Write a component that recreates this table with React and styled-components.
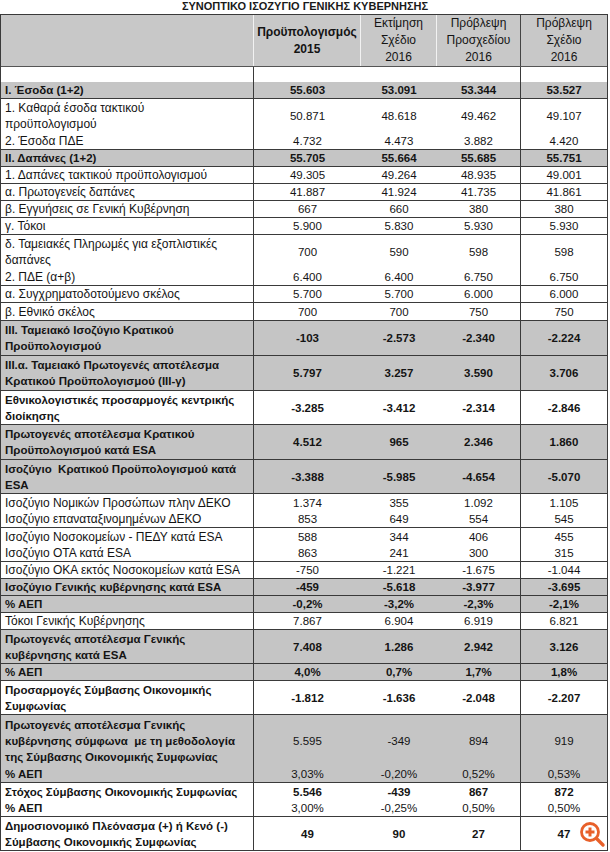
import React from 'react';
import styled, { createGlobalStyle } from 'styled-components';

const Global = createGlobalStyle`
  html, body { margin: 0; padding: 0; background: #fff; }
  body { font-family: "Liberation Sans", Arial, sans-serif; color: #141414; }
`;

const COLS = '253px 107px 76px 84px 86px';
const LINE = 17;

const Page = styled.div`
  position: relative;
  width: 610px;
  height: 852px;
  overflow: hidden;
  background: #fff;
`;

const Title = styled.div`
  height: 14px;
  line-height: 13px;
  text-align: center;
  font-size: 11px;
  font-weight: 700;
  color: #1a1a1a;
`;

const Table = styled.div`
  width: 608px;
  box-sizing: border-box;
  border-left: 1px solid #3a3a3a;
  border-right: 1px solid #3a3a3a;
  border-top: 1px solid #3a3a3a;
  font-size: 11.5px;
`;

const HeadRow = styled.div`
  display: grid;
  grid-template-columns: ${COLS};
  height: 51px;
  background: #c8c8c8;
  border-bottom: 1px solid #555;
`;

const HeadCell = styled.div`
  display: flex;
  flex-direction: column;
  align-items: center;
  justify-content: center;
  line-height: 17px;
  text-align: center;
  font-size: 12px;
  font-weight: ${p => (p.$bold ? 700 : 400)};
  border-right: 1px solid ${p => (p.$dark ? '#444' : '#f2f2f2')};
  &:last-child { border-right: none; }
`;

const Row = styled.div`
  display: grid;
  grid-template-columns: ${COLS};
  box-sizing: border-box;
  height: ${p => p.$h}px;
  background: ${p => (p.$gray ? '#c5c5c5' : '#fff')};
  border-bottom: ${p => (p.$border ? '1px solid #3a3a3a' : 'none')};
`;

const Label = styled.div`
  box-sizing: border-box;
  padding-left: 4px;
  display: flex;
  flex-direction: column;
  justify-content: center;
  line-height: 16px;
  white-space: pre;
  font-size: ${p => (p.$bold ? '11.5px' : '12px')};
  font-weight: ${p => (p.$bold ? 700 : 400)};
  border-right: 1px solid #3a3a3a;
`;

const Val = styled.div`
  display: flex;
  align-items: center;
  justify-content: center;
  font-weight: ${p => (p.$bold ? 700 : 400)};
  border-right: ${p => (p.$dark ? '1px solid #3a3a3a' : 'none')};
`;

const Zoom = styled.div`
  position: absolute;
  left: 578px;
  top: 820px;
  width: 28px;
  height: 28px;
`;

const rows = [
  { l: ['Ι. Έσοδα (1+2)'], v: ['55.603', '53.091', '53.344', '53.527'], g: 1, b: 1 },
  { l: ['1. Καθαρά έσοδα τακτικού', 'προϋπολογισμού'], v: ['50.871', '48.618', '49.462', '49.107'], nb: 1 },
  { l: ['2. Έσοδα ΠΔΕ'], v: ['4.732', '4.473', '3.882', '4.420'] },
  { l: ['ΙΙ. Δαπάνες (1+2)'], v: ['55.705', '55.664', '55.685', '55.751'], g: 1, b: 1 },
  { l: ['1. Δαπάνες τακτικού προϋπολογισμού'], v: ['49.305', '49.264', '48.935', '49.001'] },
  { l: ['α. Πρωτογενείς δαπάνες'], v: ['41.887', '41.924', '41.735', '41.861'] },
  { l: ['β. Εγγυήσεις σε Γενική Κυβέρνηση'], v: ['667', '660', '380', '380'] },
  { l: ['γ. Τόκοι'], v: ['5.900', '5.830', '5.930', '5.930'] },
  { l: ['δ. Ταμειακές Πληρωμές για εξοπλιστικές', 'δαπάνες'], v: ['700', '590', '598', '598'], nb: 1 },
  { l: ['2. ΠΔΕ (α+β)'], v: ['6.400', '6.400', '6.750', '6.750'] },
  { l: ['α. Συγχρηματοδοτούμενο σκέλος'], v: ['5.700', '5.700', '6.000', '6.000'] },
  { l: ['β. Εθνικό σκέλος'], v: ['700', '700', '750', '750'], x: 1 },
  { l: ['ΙΙΙ. Ταμειακό Ισοζύγιο Κρατικού', 'Προϋπολογισμού'], v: ['-103', '-2.573', '-2.340', '-2.224'], g: 1, b: 1, x: 1 },
  { l: ['ΙΙΙ.α. Ταμειακό Πρωτογενές αποτέλεσμα', 'Κρατικού Προϋπολογισμού (ΙΙΙ-γ)'], v: ['5.797', '3.257', '3.590', '3.706'], g: 1, b: 1, x: 1 },
  { l: ['Εθνικολογιστικές προσαρμογές κεντρικής', 'διοίκησης'], v: ['-3.285', '-3.412', '-2.314', '-2.846'], b: 1 },
  { l: ['Πρωτογενές αποτέλεσμα Κρατικού', 'Προϋπολογισμού κατά ESA'], v: ['4.512', '965', '2.346', '1.860'], g: 1, b: 1, x: 1 },
  { l: ['Ισοζύγιο  Κρατικού Προϋπολογισμού κατά', 'ESA'], v: ['-3.388', '-5.985', '-4.654', '-5.070'], g: 1, b: 1 },
  { l: ['Ισοζύγιο Νομικών Προσώπων πλην ΔΕΚΟ'], v: ['1.374', '355', '1.092', '1.105'], nb: 1 },
  { l: ['Ισοζύγιο επαναταξινομημένων ΔΕΚΟ'], v: ['853', '649', '554', '545'] },
  { l: ['Ισοζύγιο Νοσοκομείων - ΠΕΔΥ κατά ESA'], v: ['588', '344', '406', '455'], nb: 1 },
  { l: ['Ισοζύγιο ΟΤΑ κατά ESA'], v: ['863', '241', '300', '315'] },
  { l: ['Ισοζύγιο ΟΚΑ εκτός Νοσοκομείων κατά ESA'], v: ['-750', '-1.221', '-1.675', '-1.044'] },
  { l: ['Ισοζύγιο Γενικής κυβέρνησης κατά ESA'], v: ['-459', '-5.618', '-3.977', '-3.695'], g: 1, b: 1 },
  { l: ['% ΑΕΠ'], v: ['-0,2%', '-3,2%', '-2,3%', '-2,1%'], g: 1, b: 1 },
  { l: ['Τόκοι Γενικής Κυβέρνησης'], v: ['7.867', '6.904', '6.919', '6.821'] },
  { l: ['Πρωτογενές αποτέλεσμα Γενικής', 'κυβέρνησης κατά ESA'], v: ['7.408', '1.286', '2.942', '3.126'], g: 1, b: 1 },
  { l: ['% ΑΕΠ'], v: ['4,0%', '0,7%', '1,7%', '1,8%'], g: 1, b: 1 },
  { l: ['Προσαρμογές Σύμβασης Οικονομικής', 'Συμφωνίας'], v: ['-1.812', '-1.636', '-2.048', '-2.207'], b: 1 },
  { l: ['Πρωτογενές αποτέλεσμα Γενικής', 'κυβέρνησης σύμφωνα  με τη μεθοδολογία', 'της Σύμβασης Οικονομικής Συμφωνίας'], v: ['5.595', '-349', '894', '919'], g: 1, b: 1, vb: 0, nb: 1 },
  { l: ['% ΑΕΠ'], v: ['3,03%', '-0,20%', '0,52%', '0,53%'], g: 1, b: 1, vb: 0 },
  { l: ['Στόχος Σύμβασης Οικονομικής Συμφωνίας'], v: ['5.546', '-439', '867', '872'], b: 1, nb: 1 },
  { l: ['% ΑΕΠ'], v: ['3,00%', '-0,25%', '0,50%', '0,50%'], b: 1, vb: 0 },
  { l: ['Δημοσιονομικό Πλεόνασμα (+) ή Κενό (-)', 'Σύμβασης Οικονομικής Συμφωνίας'], v: ['49', '90', '27', '47'], b: 1 },
];

function ZoomIcon() {
  return (
    <Zoom>
      <svg width="28" height="28" viewBox="0 0 28 28">
        <line x1="17" y1="17" x2="25" y2="25" stroke="#e8602a" strokeWidth="3.4" strokeLinecap="round" />
        <circle cx="12" cy="12" r="8.5" fill="#fff" stroke="#e8602a" strokeWidth="2.8" />
        <line x1="12" y1="7.5" x2="12" y2="16.5" stroke="#e8602a" strokeWidth="3" />
        <line x1="7.5" y1="12" x2="16.5" y2="12" stroke="#e8602a" strokeWidth="3" />
      </svg>
    </Zoom>
  );
}

export default function App() {
  return (
    <Page>
      <Global />
      <Title>ΣΥΝΟΠΤΙΚΟ ΙΣΟΖΥΓΙΟ ΓΕΝΙΚΗΣ ΚΥΒΕΡΝΗΣΗΣ</Title>
      <Table>
        <HeadRow>
          <HeadCell />
          <HeadCell $bold>
            <span>Προϋπολογισμός</span>
            <span>2015</span>
          </HeadCell>
          <HeadCell>
            <span>Εκτίμηση</span>
            <span>Σχέδιο</span>
            <span>2016</span>
          </HeadCell>
          <HeadCell $dark>
            <span>Πρόβλεψη</span>
            <span>Προσχεδίου</span>
            <span>2016</span>
          </HeadCell>
          <HeadCell>
            <span>Πρόβλεψη</span>
            <span>Σχέδιο</span>
            <span>2016</span>
          </HeadCell>
        </HeadRow>
        <Row $h={15}>
          <Label />
          <Val />
          <Val />
          <Val $dark />
          <Val />
        </Row>
        {rows.map((r, i) => {
          const vb = r.vb === undefined ? !!r.b : !!r.vb;
          return (
            <Row key={i} $h={r.l.length * LINE + (r.x ? 1 : 0)} $gray={!!r.g} $border={!r.nb}>
              <Label $bold={!!r.b}>
                {r.l.map((t, j) => (
                  <span key={j}>{t}</span>
                ))}
              </Label>
              <Val $bold={vb}>{r.v[0]}</Val>
              <Val $bold={vb}>{r.v[1]}</Val>
              <Val $bold={vb} $dark>{r.v[2]}</Val>
              <Val $bold={vb}>{r.v[3]}</Val>
            </Row>
          );
        })}
      </Table>
      <ZoomIcon />
    </Page>
  );
}
